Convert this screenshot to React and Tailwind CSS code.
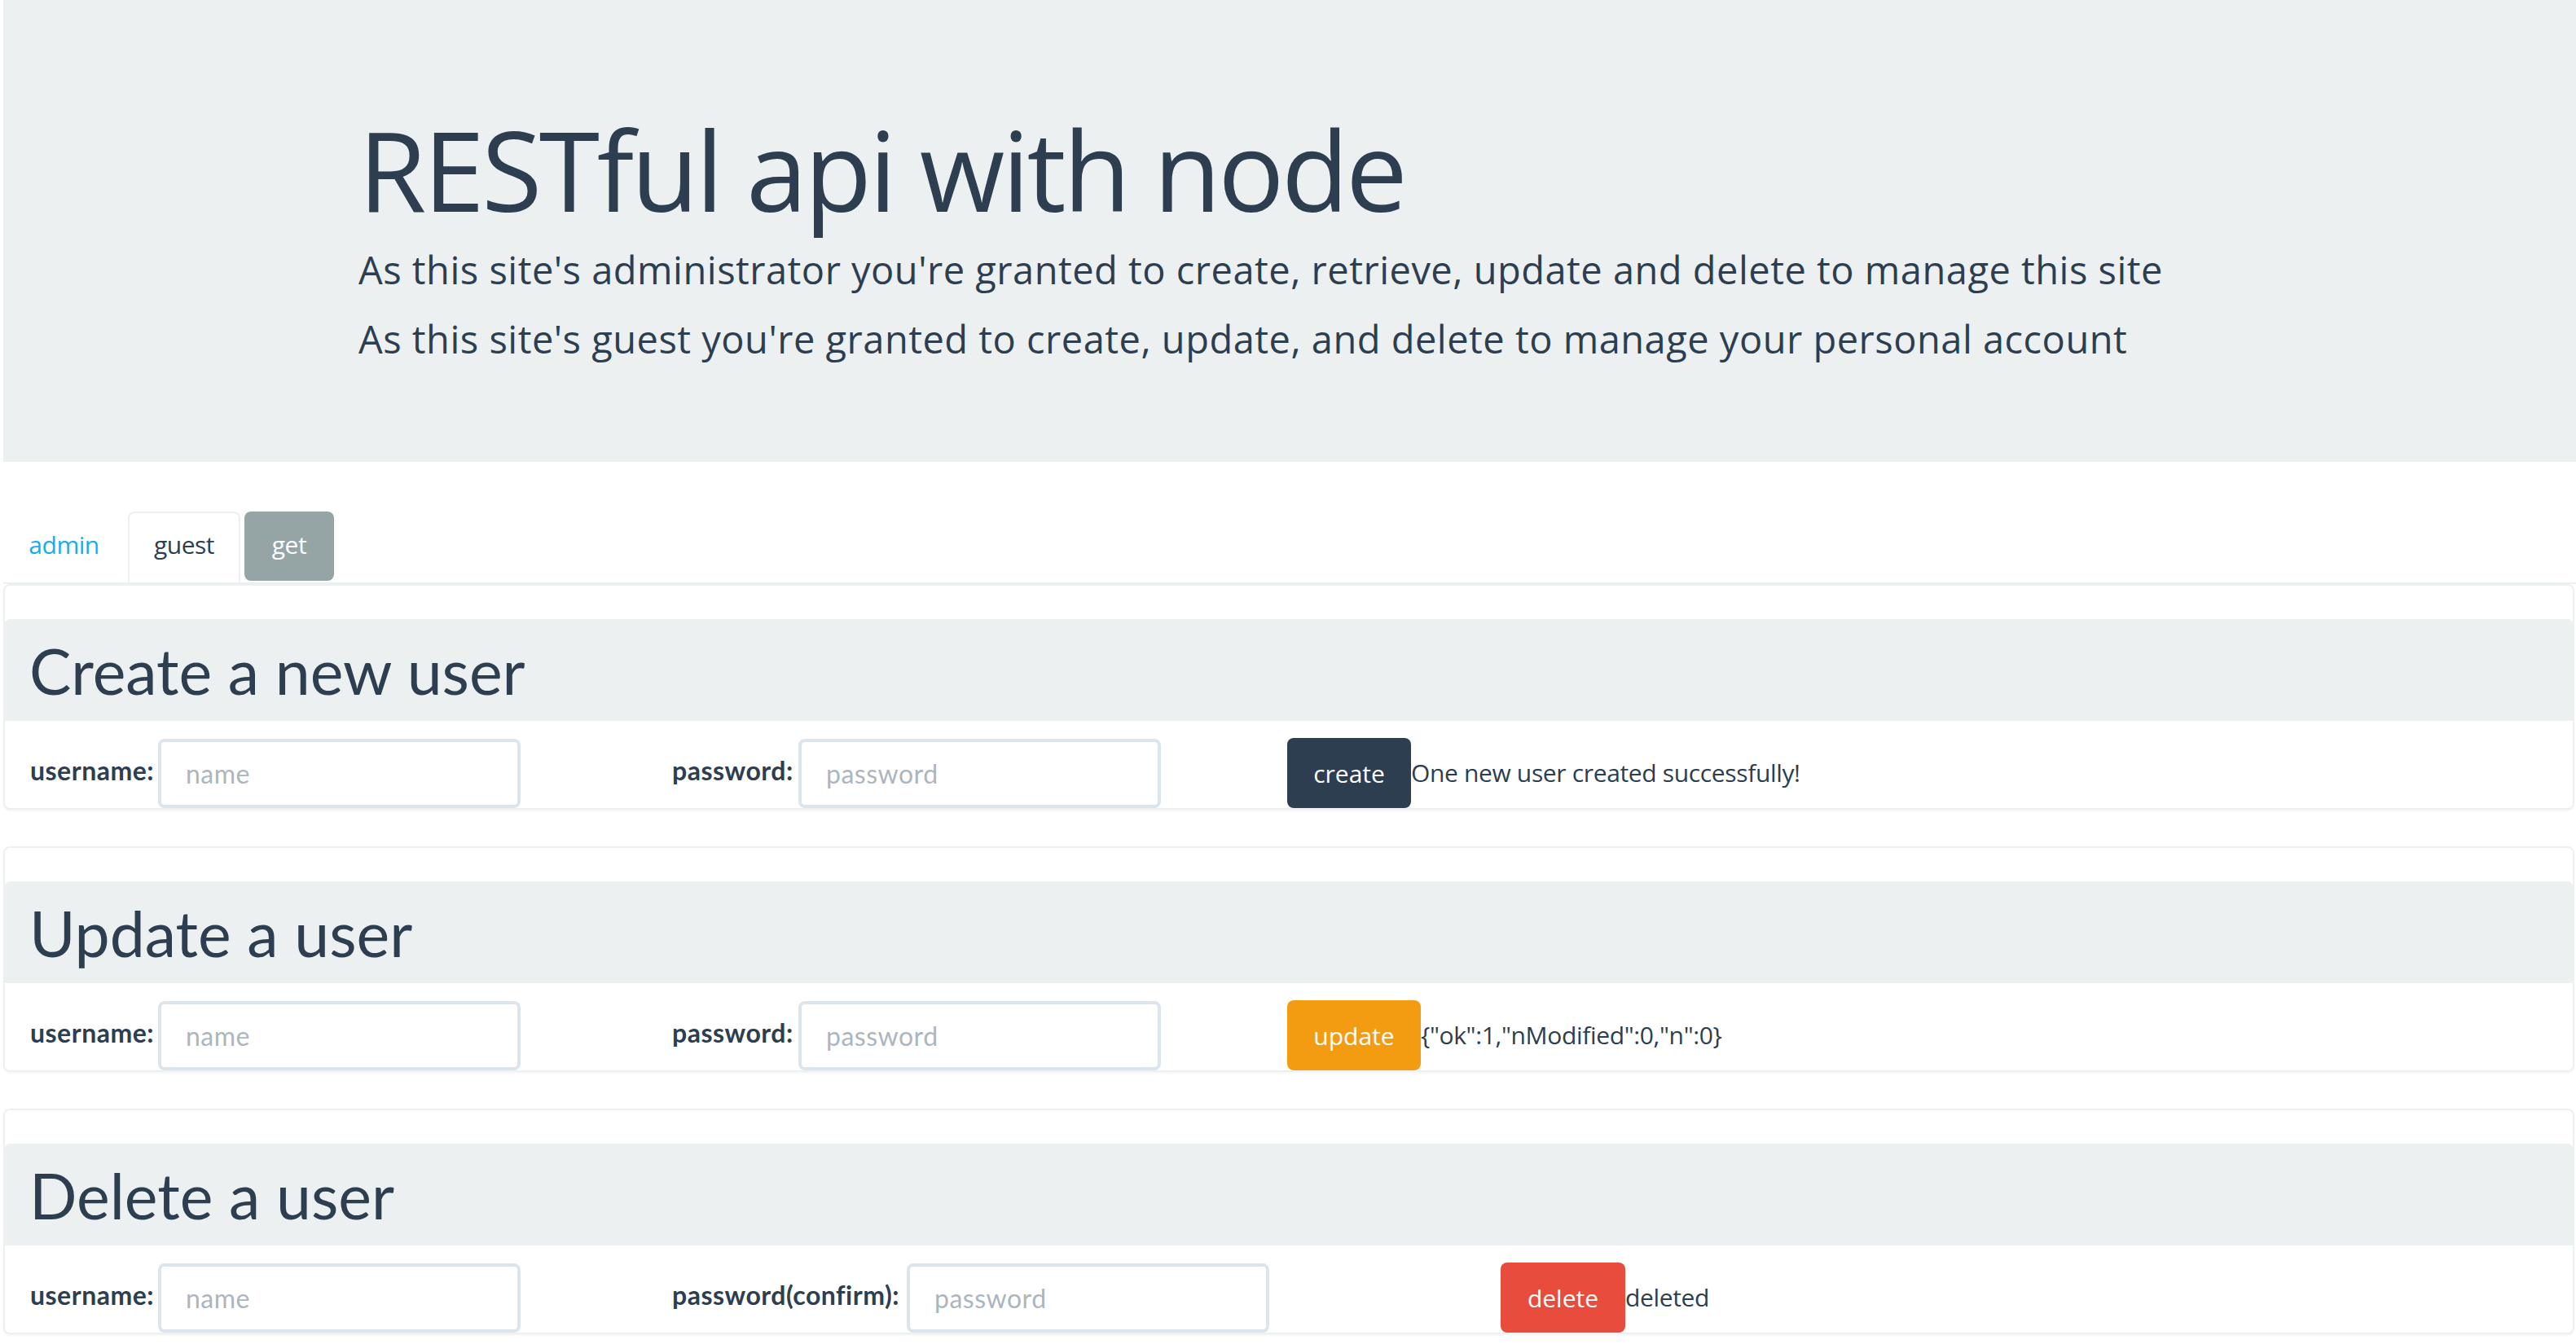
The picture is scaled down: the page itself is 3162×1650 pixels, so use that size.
import React from "react";

const OPEN = "font-['Open_Sans',sans-serif]";
const LATO = "font-['Lato',sans-serif]";

function Field({ label, labelW, placeholder }) {
  return (
    <div className="flex items-center">
      <label className={`${LATO} font-bold text-[32px] leading-[43px] tracking-[0.5px] text-[#2c3e50] pb-[8px] shrink-0 ${labelW}`}>
        {label}
      </label>
      <input
        type="text"
        placeholder={placeholder}
        className={`${LATO} w-[445px] h-[85px] border-[4px] border-[#dce4ec] rounded-[8px] px-[30px] text-[32px] tracking-[0.5px] text-[#2c3e50] placeholder:text-[#acb6c0] bg-white outline-none`}
      />
    </div>
  );
}

function Card({ title, pwLabel, pwLabelW, group2W, btn, btnW, btnBg, msg, first }) {
  return (
    <div
      className={`${first ? "" : "mt-[45px]"} ml-[4px] mr-[2px] border-2 border-[#ecf0f1] rounded-[8px] pt-[41px] bg-white shadow-[0_2px_3px_rgba(0,0,0,0.04)]`}
    >
      <div className="bg-[#ecf0f1] rounded-t-[6px] h-[125px] pt-[20px] pl-[30px]">
        <h2 className={`${LATO} text-[77px] leading-[87px] text-[#2c3e50] font-normal`}>{title}</h2>
      </div>
      <div className="flex items-center pt-[21px]">
        <div className="w-[788px] pl-[31px] shrink-0">
          <Field label="username:" labelW="w-[157px]" placeholder="name" />
        </div>
        <div className={`${group2W} pl-[31px] shrink-0`}>
          <Field label={pwLabel} labelW={pwLabelW} placeholder="password" />
        </div>
        <div className="flex items-center">
          <button
            className={`${OPEN} ${btnW} ${btnBg} h-[86px] rounded-[8px] text-white text-[30px] leading-[43px] flex items-center justify-center`}
          >
            {btn}
          </button>
          <span className={`${OPEN} text-[30px] leading-[40px] tracking-[-0.35px] text-[#2c3e50] whitespace-pre`}>{msg}</span>
        </div>
      </div>
    </div>
  );
}

export default function App() {
  return (
    <div className="bg-white min-h-[1650px] w-full">
      <div className="ml-[4px] bg-[#ecf0f1] h-[567px] pt-[134px] pl-[436px]">
        <h1 className={`${OPEN} text-[135px] leading-[1.1] tracking-[-3.5px] text-[#2c3e50] font-normal mb-[16px]`}>
          RESTful api with node
        </h1>
        <p className={`${OPEN} text-[47px] leading-[64px] tracking-[0.5px] text-[#2c3e50] mb-[21px]`}>
          As this site's administrator you're granted to create, retrieve, update and delete to manage this site
        </p>
        <p className={`${OPEN} text-[47px] leading-[64px] tracking-[0.5px] text-[#2c3e50]`}>
          As this site's guest you're granted to create, update, and delete to manage your personal account
        </p>
      </div>

      <div className="mt-[61px] ml-[4px] flex items-end border-b-2 border-[#ecf0f1]">
        <div className={`${OPEN} w-[149px] h-[87px] pt-[17px] border-2 border-transparent text-[30px] leading-[43px] tracking-[-0.5px] text-[#12aef0] flex justify-center`}>
          admin
        </div>
        <div className={`${OPEN} ml-[4px] w-[138px] h-[87px] pt-[17px] border-2 border-b-0 border-[#ecf0f1] rounded-t-[8px] text-[30px] leading-[43px] tracking-[-0.5px] text-[#2c3e50] flex justify-center bg-white`}>
          guest
        </div>
        <div className={`${OPEN} ml-[5px] mb-[2px] w-[110px] h-[85px] pt-[19px] bg-[#95a5a6] rounded-[8px] text-[30px] leading-[43px] tracking-[-0.5px] text-white flex justify-center`}>
          get
        </div>
      </div>

      <Card
        first
        title="Create a new user"
        pwLabel="password:"
        pwLabelW="w-[155px]"
        group2W="w-[786px]"
        btn="create"
        btnW="w-[152px]"
        btnBg="bg-[#2c3e50]"
        msg="One new user created successfully!"
      />
      <Card
        title="Update a user"
        pwLabel="password:"
        pwLabelW="w-[155px]"
        group2W="w-[786px]"
        btn="update"
        btnW="w-[164px]"
        btnBg="bg-[#f39c12]"
        msg={'{"ok":1,"nModified":0,"n":0}'}
      />
      <Card
        title="Delete a user"
        pwLabel="password(confirm):"
        pwLabelW="w-[288px]"
        group2W="w-[1048px]"
        btn="delete"
        btnW="w-[153px]"
        btnBg="bg-[#e74c3c]"
        msg="deleted"
      />
    </div>
  );
}
